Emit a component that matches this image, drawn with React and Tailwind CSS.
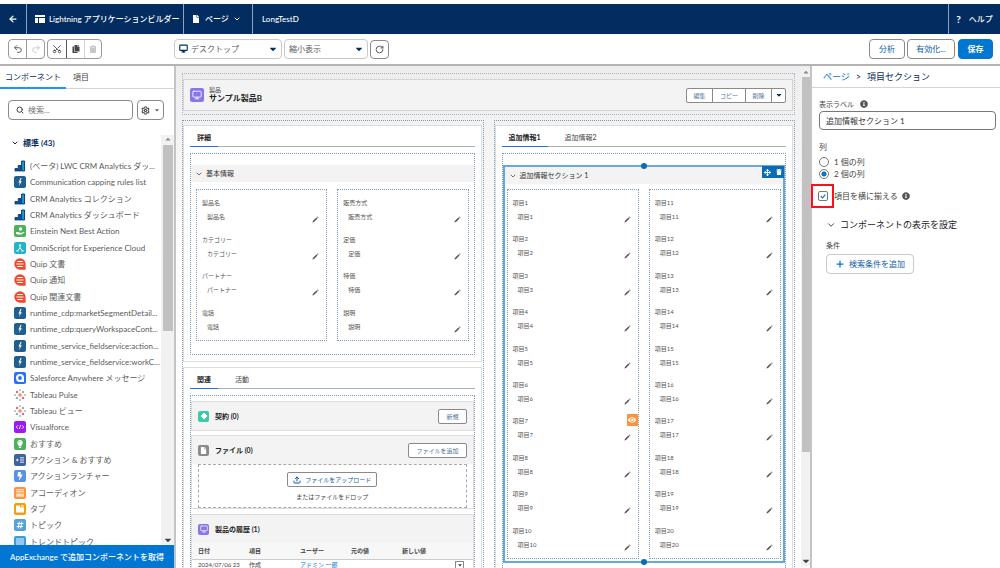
import { ArrowLeft, ChevronDown, Monitor, Plus, Redo2, RotateCw, Scissors, Search, Settings, Undo2, Upload } from 'lucide-react';
import { FaArrowsAlt, FaBolt, FaCaretDown, FaCaretUp, FaClipboard, FaCopy, FaEye, FaFile, FaHashtag, FaInfoCircle, FaLightbulb, FaTrash } from 'react-icons/fa';

// kind picks the icon drawn in front of the label
const STANDARD_COMPONENTS = [
  { label: '(ベータ) LWC CRM Analytics ダッ...', kind: 'analytics' },
  { label: 'Communication capping rules list', kind: 'lightning' },
  { label: 'CRM Analytics コレクション', kind: 'analytics' },
  { label: 'CRM Analytics ダッシュボード', kind: 'analytics' },
  { label: 'Einstein Next Best Action', kind: 'einstein' },
  { label: 'OmniScript for Experience Cloud', kind: 'omni' },
  { label: 'Quip 文書', kind: 'quip' },
  { label: 'Quip 通知', kind: 'quip' },
  { label: 'Quip 関連文書', kind: 'quip' },
  { label: 'runtime_cdp:marketSegmentDetail...', kind: 'lightning' },
  { label: 'runtime_cdp:queryWorkspaceCont...', kind: 'lightning' },
  { label: 'runtime_service_fieldservice:action...', kind: 'lightning' },
  { label: 'runtime_service_fieldservice:workC...', kind: 'lightning' },
  { label: 'Salesforce Anywhere メッセージ', kind: 'anywhere' },
  { label: 'Tableau Pulse', kind: 'tableau' },
  { label: 'Tableau ビュー', kind: 'tableau' },
  { label: 'Visualforce', kind: 'visualforce' },
  { label: 'おすすめ', kind: 'suggest' },
  { label: 'アクション & おすすめ', kind: 'actions' },
  { label: 'アクションランチャー', kind: 'launcher' },
  { label: 'アコーディオン', kind: 'accordion' },
  { label: 'タブ', kind: 'tabs' },
  { label: 'トピック', kind: 'topic' },
  { label: 'トレンドトピック', kind: 'trend' },
];

const BASIC_LEFT = ['製品名', 'カテゴリー', 'パートナー', '電話'];
const BASIC_RIGHT = ['販売方式', '定価', '特価', '説明'];
const EXTRA_LEFT = Array.from({ length: 10 }, (_, i) => `項目${i + 1}`);
const EXTRA_RIGHT = Array.from({ length: 10 }, (_, i) => `項目${i + 11}`);

function Tile({ className, children }) {
  return (
    <span className={`flex shrink-0 items-center justify-center rounded-xs text-white ${className}`}>
      {children}
    </span>
  );
}

function ComponentIcon({ kind }) {
  switch (kind) {
    case 'analytics':
      return (
        <svg viewBox="0 0 12 12" className="size-3 shrink-0">
          <path d="M1 8.5h2.6V11H1zM4.2 5.5h2.8V11H4.2z" fill="#0b5cab" stroke="#032d60" strokeWidth=".8" />
          <path d="M7.6 1h3v10h-3z" fill="#0d9dda" stroke="#032d60" strokeWidth=".9" />
        </svg>
      );
    case 'lightning':
      return (
        <Tile className="size-3 bg-[#215f8e]">
          <svg viewBox="0 0 12 12" className="size-3"><path d="M6.6 2 4.4 6.6h1.4L5 10l2.8-4.8H6.3L7.6 2z" fill="currentColor" /></svg>
        </Tile>
      );
    case 'einstein':
      return (
        <Tile className="size-3 bg-[#4bb15a]">
          <svg viewBox="0 0 12 12" className="size-3" fill="currentColor">
            <circle cx="6.5" cy="4" r="1.7" /><path d="M2 7h2l2 .7h2l2-.9.4.8L7.4 9.6H4L2 9z" />
          </svg>
        </Tile>
      );
    case 'omni':
      return (
        <Tile className="size-3 bg-[#1fb6c9]">
          <svg viewBox="0 0 12 12" className="size-3" fill="none" stroke="currentColor">
            <path d="M6 4v2M3.5 8.5 6 6l2.5 2.5" />
            <path d="M5 2.5h2V4H5zM2.5 8h2v1.5h-2zM7.5 8h2v1.5h-2z" fill="currentColor" stroke="none" />
          </svg>
        </Tile>
      );
    case 'quip':
      return (
        <svg viewBox="0 0 12 12" className="size-3 shrink-0">
          <path d="M6 .3a5.7 5.7 0 1 0 0 11.4h5.6V6A5.7 5.7 0 0 0 6 .3z" fill="#f0492e" />
          <path d="M3.2 3.5h5.6M2.4 6h7.2M3.2 8.5h5.6" stroke="#fff" />
        </svg>
      );
    case 'anywhere':
      return (
        <Tile className="size-3 bg-[#2a73f0]">
          <svg viewBox="0 0 12 12" className="size-3">
            <path d="M6 2a4 4 0 1 0 0 8h4V6a4 4 0 0 0-4-4z" fill="#fff" /><circle cx="6" cy="6" r="1.9" fill="#2a73f0" />
          </svg>
        </Tile>
      );
    case 'tableau':
      return (
        <svg viewBox="0 0 12 12" className="size-3 shrink-0" fill="none">
          <path d="M6 4v4M4 6h4" stroke="#e8762d" strokeWidth="1" />
          <path d="M3 1.8v2.4M1.8 3h2.4M9 7.8v2.4M7.8 9h2.4" stroke="#c72037" strokeWidth=".8" />
          <path d="M9 1.8v2.4M7.8 3h2.4M3 7.8v2.4M1.8 9h2.4" stroke="#5b879b" strokeWidth=".8" />
          <path d="M6 0v2M5 1h2M6 10v2M5 11h2M1 5v2M0 6h2M11 5v2M10 6h2" stroke="#8a8fb5" strokeWidth=".6" />
        </svg>
      );
    case 'visualforce':
      return (
        <Tile className="size-3 bg-[#9a1af0]">
          <svg viewBox="0 0 12 12" className="size-3" fill="none" stroke="currentColor" strokeWidth=".8">
            <path d="M4 4.2 2.2 6 4 7.8M8 4.2 9.8 6 8 7.8M6.6 4 5.4 8" />
          </svg>
        </Tile>
      );
    case 'suggest':
      return <Tile className="size-3 bg-[#4bb15a]"><FaLightbulb className="size-2" /></Tile>;
    case 'actions':
      return (
        <Tile className="size-3 bg-[#3f63a0]">
          <svg viewBox="0 0 12 12" className="size-3" stroke="currentColor" strokeWidth=".9">
            <path d="M2 6h2.6M3.3 4.7v2.6M6 3.8h4M6 6h4M6 8.2h4" />
          </svg>
        </Tile>
      );
    case 'launcher':
      return <Tile className="size-3 bg-[#5a92e6]"><FaBolt className="size-2" /></Tile>;
    case 'accordion':
      return (
        <Tile className="size-3 bg-[#fe9339]">
          <svg viewBox="0 0 12 12" className="size-3">
            <path d="M2 2.8h8M2 4.8h8" stroke="#fff" strokeWidth=".9" /><path d="M2 6.4h8v3.4H2z" fill="#ffdcbb" />
          </svg>
        </Tile>
      );
    case 'tabs':
      return (
        <Tile className="size-3 bg-[#f39e0b]">
          <svg viewBox="0 0 12 12" className="size-3"><path d="M2 2.4h4v1.8h4v5.4H2z" fill="#fff" /><path d="M7 2.4h3v1H7z" fill="#fff" /></svg>
        </Tile>
      );
    case 'topic':
      return <Tile className="size-3 bg-[#56a0dc]"><FaHashtag className="size-2" /></Tile>;
    default:
      return (
        <Tile className="size-3 bg-[#3d9bdc]">
          <svg viewBox="0 0 12 12" className="size-3" stroke="#fff" strokeWidth=".9"><path d="M2 3h8M2 5h8M2 7h8M2 9h8" /></svg>
        </Tile>
      );
  }
}

function NavBar() {
  return (
    <header className="mt-1 flex h-[30px] shrink-0 items-stretch bg-[#032d60] text-[8px] font-medium text-white">
      <button aria-label="戻る" className="flex w-[27px] items-center justify-center border-r border-[#8fa3bd]">
        <ArrowLeft className="size-[10px]" strokeWidth={3} />
      </button>
      <div className="flex w-[157px] items-center gap-1 border-r border-[#8fa3bd] pl-2 whitespace-nowrap">
        <svg viewBox="0 0 10 10" className="size-[10px] shrink-0" fill="currentColor">
          <path d="M0 1h10v2H0zM0 4h3v5H0zM4 4h6v5H4z" />
        </svg>
        Lightning アプリケーションビルダー
      </div>
      <button className="flex w-[69px] items-center gap-1 border-r border-[#8fa3bd] pl-2 text-[8px] whitespace-nowrap">
        <FaFile className="mr-px size-2" />
        ページ
        <ChevronDown className="size-2" strokeWidth={3} />
      </button>
      <div className="flex flex-1 items-center pl-[9px]">LongTestD</div>
      <button className="flex w-[52px] items-center justify-center gap-2 border-l border-[#8fa3bd]">
        <span className="text-[10px] font-bold">?</span>ヘルプ
      </button>
    </header>
  );
}

function Picker({ label, options, className, padding, icon }) {
  return (
    <div className={`relative h-5 ${className}`}>
      <select aria-label={label} className={`block size-full appearance-none rounded-sm border border-[#c9c9c9] bg-white text-[8px] text-[#5c5c5c] ${padding}`}>
        {options.map((o) => <option key={o}>{o}</option>)}
      </select>
      {icon}
      <FaCaretDown className="pointer-events-none absolute top-[5px] right-1 size-[10px] text-[#032d60]" />
    </div>
  );
}

function Toolbar() {
  const tool = 'flex h-[18px] items-center justify-center text-[#444]';
  const action = 'flex h-5 items-center justify-center rounded-sm border text-[8px] whitespace-nowrap';
  return (
    <div className="flex h-8 shrink-0 items-center border-b-2 border-[#b3b3b3] bg-white">
      <div className="flex w-[174px] gap-[2px] pl-2">
        <div className="flex rounded-sm border border-[#9a9a9a]">
          <button aria-label="元に戻す" className={`${tool} w-[18px] border-r border-[#9a9a9a]`}><Undo2 className="size-[10px]" /></button>
          <button aria-label="やり直し" disabled className={`${tool} w-[17px] opacity-30`}><Redo2 className="size-[10px]" /></button>
        </div>
        <div className="flex rounded-sm border border-[#9a9a9a]">
          <button aria-label="切り取り" className={`${tool} w-[18px]`}><Scissors className="size-[10px] -rotate-90" /></button>
          <button aria-label="コピー" className={`${tool} w-[18px] border-l border-[#555]`}><FaCopy className="size-2" /></button>
          <button aria-label="貼り付け" disabled className={`${tool} w-[17px] border-l border-[#777] opacity-30`}><FaClipboard className="size-2" /></button>
        </div>
      </div>
      <Picker
        label="デバイス"
        options={['デスクトップ', '電話']}
        className="w-[108px]"
        padding="pl-4"
        icon={<Monitor className="pointer-events-none absolute top-[5px] left-[5px] size-[9px] text-[#032d60]" strokeWidth={3} />}
      />
      <Picker label="表示倍率" options={['縮小表示', '100%']} className="ml-[2px] w-[84px]" padding="pl-1" />
      <button aria-label="更新" className="ml-[2px] flex size-[19px] items-center justify-center rounded-sm border border-[#8a8a8a] text-[#555]">
        <RotateCw className="size-[9px]" strokeWidth={2.5} />
      </button>
      <div className="ml-auto flex gap-[2px] pr-[7px]">
        <button className={`${action} w-9 border-[#8a8a8a] text-[#0b5cab]`}>分析</button>
        <button className={`${action} w-12 border-[#8a8a8a] text-[#0b5cab]`}>有効化...</button>
        <button className={`${action} ml-px w-[35px] border-[#0176d3] bg-[#0176d3] font-bold text-white`}>保存</button>
      </div>
    </div>
  );
}

function ScrollTrack({ className, thumb }) {
  return (
    <div aria-hidden="true" className={`flex flex-col items-center bg-[#f1f1f1] ${className}`}>
      <FaCaretUp className="size-2 shrink-0 text-[#888]" />
      <div className={`shrink-0 bg-[#c1c1c1] ${thumb}`} />
      <FaCaretDown className="mt-auto size-[10px] shrink-0 text-[#444]" />
    </div>
  );
}

function ComponentPanel() {
  return (
    <aside className="flex w-[176px] shrink-0 flex-col border-r-2 border-[#c4c4c4] bg-white">
      <div role="tablist" className="flex h-[23px] shrink-0 border-b border-[#d4d4d4] text-[8px]">
        <button role="tab" aria-selected="true" className="-mb-px w-[66px] border-b-2 border-[#1b96ff] text-[#032d60]">コンポーネント</button>
        <button role="tab" aria-selected="false" className="w-[30px] text-[#444]">項目</button>
      </div>
      <div className="mt-[11px] flex shrink-0 gap-1 pl-2">
        <label className="flex h-5 w-[125px] items-center gap-1 rounded-sm border border-[#8a8a8a] px-[7px]">
          <Search className="size-2 shrink-0 text-[#444]" strokeWidth={3} />
          <input aria-label="コンポーネントを検索" placeholder="検索..." className="w-full text-[8px] outline-none placeholder:text-[#777]" />
        </label>
        <button aria-label="設定" className="flex h-5 w-[27px] items-center justify-center gap-1 rounded-sm border border-[#8a8a8a] text-[#555]">
          <Settings className="size-[9px]" strokeWidth={3} />
          <FaCaretDown className="size-[6px]" />
        </button>
      </div>
      <div className="mt-3 flex min-h-0 flex-1">
        <div className="min-w-0 flex-1 overflow-hidden">
          <button className="flex h-[22px] items-center gap-1 pl-[11px] text-[8px] font-bold text-[#032d60]">
            <ChevronDown className="size-2" strokeWidth={3} />
            標準 (43)
          </button>
          <ul className="mt-1 flex h-[392px] flex-col text-[8px] text-[#5c5c5c]">
            {STANDARD_COMPONENTS.map(({ label, kind }) => (
              <li key={label} className="flex flex-1 items-center">
                <button className="flex h-4 items-center gap-1 pl-[14px] text-left whitespace-nowrap">
                  <ComponentIcon kind={kind} />
                  {label}
                </button>
              </li>
            ))}
          </ul>
        </div>
        <ScrollTrack className="mt-[3px] w-[13px]" thumb="w-[10px] mt-[2px] h-[186px]" />
      </div>
      <a href="#appexchange" className="flex h-[23px] shrink-0 items-center justify-center bg-[#0176d3] text-[8px] font-medium whitespace-nowrap text-white">
        AppExchange で追加コンポーネントを取得
      </a>
    </aside>
  );
}

function FieldColumn({ fields, readOnly = [], hidden = [] }) {
  return (
    <div className="flex flex-1 flex-col border border-dotted border-[#7f97b8] pt-1">
      {fields.map((name) => (
        <div key={name} className="relative flex flex-1 justify-between pr-[7px] pl-[5px] text-[6px] text-[#555]">
          <div>
            <div className="h-4 leading-[18px]">{name}</div>
            <div className="h-3 pl-[5px] leading-[14px]">{name}</div>
          </div>
          {!readOnly.includes(name) && (
            <button aria-label={`${name}を編集`} className="mt-[22px] size-[7px] text-[#555]">
              <svg viewBox="0 0 7 7" className="size-[7px]" fill="currentColor">
                <path d="M.4 6.6.9 5 4.4 1.5l1.1 1.1L2 6.1zM4.9 1l.6-.6 1.1 1.1-.6.6z" />
              </svg>
            </button>
          )}
          {hidden.includes(name) && (
            <span className="absolute top-[2px] right-0 flex h-3 w-[11px] items-center justify-center bg-[#fe9339] text-white">
              <FaEye className="size-2" />
            </span>
          )}
        </div>
      ))}
    </div>
  );
}

function SectionHeader({ children }) {
  return (
    <button className="flex h-[17px] w-full shrink-0 items-center gap-[3px] bg-[#f3f3f3] pl-1 text-[7px] text-[#333]">
      <ChevronDown className="size-2" />
      {children}
    </button>
  );
}

function CardTabs({ tabs, activeWidth }) {
  return (
    <div role="tablist" className="flex h-[21px] gap-4 border-b border-[#aeb0b3] pt-[2px] text-[7px] text-[#444]">
      {tabs.map((t, i) => (
        <button
          key={t}
          role="tab"
          aria-selected={i === 0}
          className={i === 0 ? `-mb-px border-b border-[#1b78d8] font-bold text-[#222] ${activeWidth}` : 'pl-px'}
        >
          {t}
        </button>
      ))}
    </div>
  );
}

function RelatedHeader({ icon, title, action }) {
  return (
    <div className="flex h-7 items-center gap-[6px] bg-[#f3f3f3] px-[6px]">
      {icon}
      <h3 className="flex-1 text-[7px] font-bold text-[#222]">{title}</h3>
      {action && (
        <button className="h-[15px] rounded-xs border border-[#8a8a8a] bg-white px-[7px] text-[6px] text-[#4f7398]">{action}</button>
      )}
    </div>
  );
}

function RecordHeader() {
  return (
    <div className="border border-dotted border-[#9fb3cf] pt-[5px] pr-px pb-[3px]">
      <div className="flex h-8 items-center border border-[#d4d4d4] bg-[#f3f3f3] px-[6px]">
        <Tile className="size-[14px] bg-[#8a76e8]"><Monitor className="size-[10px]" /></Tile>
        <div className="flex-1 pl-[5px]">
          <div className="text-[6px] leading-[6px] text-[#444]">製品</div>
          <h1 className="text-[8px] leading-[10px] font-bold text-[#222]">サンプル製品B</h1>
        </div>
        <div className="flex h-[15px] divide-x divide-[#8a8a8a] rounded-xs border border-[#8a8a8a] bg-white text-[6px] text-[#4f7398]">
          <button className="w-[26px]">編集</button>
          <button className="w-[33px]">コピー</button>
          <button className="w-[26px]">削除</button>
          <button aria-label="その他のアクション" className="flex w-[13px] items-center justify-center text-[#032d60]"><FaCaretDown className="size-2" /></button>
        </div>
      </div>
    </div>
  );
}

function RelatedLists() {
  return (
    <div className="mt-[6px] flex flex-col border border-dotted border-[#7f97b8] pt-[5px] pb-6">
      <div className="border border-[#ddd]">
        <RelatedHeader
          icon={(
            <Tile className="size-[11px] bg-[#3bcaaa]">
              <svg viewBox="0 0 10 10" className="size-[10px]"><path d="M5 2 8 5 5 8 2 5z" fill="#fff" stroke="#fff" strokeLinejoin="round" /></svg>
            </Tile>
          )}
          title="契約 (0)"
          action="新規"
        />
      </div>
      <div className="mt-1 border border-[#ddd]">
        <RelatedHeader
          icon={<Tile className="size-[11px] bg-[#8b8b8b]"><FaFile className="size-[7px]" /></Tile>}
          title="ファイル (0)"
          action="ファイルを追加"
        />
        <div className="mx-[6px] flex h-11 flex-col items-center border border-dashed border-[#aaa] pt-[7px]">
          <button className="flex h-[15px] items-center gap-1 rounded-xs border border-[#8a8a8a] px-[5px] text-[6px] text-[#0b5cab]">
            <Upload className="size-2" strokeWidth={3} />
            ファイルをアップロード
          </button>
          <span className="mt-1 text-[6px] leading-[12px] text-[#444]">またはファイルをドロップ</span>
        </div>
      </div>
      <div className="mt-[5px] border border-[#ddd]">
        <RelatedHeader
          icon={<Tile className="size-[11px] bg-[#8a76e8]"><Monitor className="size-2" /></Tile>}
          title="製品の履歴 (1)"
        />
        <table className="w-full table-fixed text-left text-[6px] text-[#444]">
          <thead className="bg-[#f7f7f7]">
            <tr className="h-4 border-b border-[#ccc]">
              {['日付', '項目', 'ユーザー', '元の値', '新しい値'].map((h) => (
                <th key={h} className="w-[51px] pl-[6px] font-bold">{h}</th>
              ))}
              <th aria-label="操作" />
            </tr>
          </thead>
          <tbody>
            <tr className="h-3">
              <td className="pl-[6px] leading-[6px] whitespace-nowrap">2024/07/06 23</td>
              <td className="pl-[6px] leading-[6px]">作成</td>
              <td className="pl-[6px] leading-[6px] whitespace-nowrap"><a href="#user" className="text-[#0176d3]">アドミン 一郎</a></td>
              <td />
              <td />
              <td>
                <button aria-label="行のアクション" className="ml-2 flex size-[9px] items-center justify-center border border-[#8a8a8a]"><FaCaretDown className="size-[6px]" /></button>
              </td>
            </tr>
          </tbody>
        </table>
      </div>
    </div>
  );
}

function SelectedSection() {
  return (
    <div className="relative mt-[11px] border-2 border-[#64aadd]">
      <SectionHeader>追加情報セクション 1</SectionHeader>
      <div className="flex h-[377px] gap-[10px] px-[2px] pt-[5px] pb-[2px]">
        <FieldColumn fields={EXTRA_LEFT} hidden={['項目7']} />
        <FieldColumn fields={EXTRA_RIGHT} />
      </div>
      <span className="absolute -top-1 left-1/2 size-[6px] -translate-x-1/2 rounded-full bg-[#0b6cb5]" />
      <span className="absolute -bottom-1 left-1/2 size-[6px] -translate-x-1/2 rounded-full bg-[#0b6cb5]" />
      <div className="absolute -top-px -right-px flex h-3 w-[22px] items-center justify-around bg-[#0b6cb5] text-white">
        <button aria-label="移動"><FaArrowsAlt className="size-[7px]" /></button>
        <button aria-label="削除"><FaTrash className="size-[6px]" /></button>
      </div>
    </div>
  );
}

function Canvas() {
  const column = 'min-w-0 flex-1 border border-dotted border-[#7f97b8] pt-1 pr-px';
  const card = 'border border-[#ddd] bg-white px-[6px] pb-[6px]';
  return (
    <main className="flex min-w-0 flex-1 bg-linear-to-b from-[#ededed] to-white to-40%">
      <div className="min-w-0 flex-1 overflow-hidden px-[6px] pt-[7px]">
        <RecordHeader />
        <div className="mt-[5px] flex items-stretch gap-[10px]">
          <div className={column}>
            <section className={card}>
              <CardTabs tabs={['詳細']} activeWidth="w-[28px]" />
              <div className="mt-[6px] border border-dotted border-[#7f97b8] pt-[11px] pb-[13px]">
                <SectionHeader>基本情報</SectionHeader>
                <div className="mt-[7px] flex h-[152px] gap-[10px] px-[5px]">
                  <FieldColumn fields={BASIC_LEFT} readOnly={['電話']} />
                  <FieldColumn fields={BASIC_RIGHT} />
                </div>
              </div>
            </section>
            <section className={`${card} mt-[5px]`}>
              <CardTabs tabs={['関連', '活動']} activeWidth="w-[28px]" />
              <RelatedLists />
            </section>
          </div>
          <div className={column}>
            <section className={`${card} h-full`}>
              <CardTabs tabs={['追加情報1', '追加情報2']} activeWidth="w-[46px]" />
              <div className="mt-[6px] border border-dotted border-[#7f97b8] pb-4">
                <SelectedSection />
              </div>
            </section>
          </div>
        </div>
      </div>
      <ScrollTrack className="my-[2px] w-[9px]" thumb="w-2 mt-px h-[375px]" />
    </main>
  );
}

function PropertyPanel() {
  return (
    <aside className="w-[190px] shrink-0 border-l-2 border-[#c4c4c4] bg-white text-[8px] text-[#444]">
      <nav className="flex h-[22px] items-center gap-[6px] border-b border-[#d4d4d4] pl-[11px] text-[9px] text-[#032d60]">
        <a href="#page" className="text-[#0176d3]">ページ</a>
        <span>&gt;</span>
        <span>項目セクション</span>
      </nav>
      <div className="pr-1 pl-[7px]">
        <div className="mt-[10px] flex h-3 items-center gap-[6px]">
          <label htmlFor="section-label" className="text-[7px]">表示ラベル</label>
          <FaInfoCircle className="size-2 text-[#555]" />
        </div>
        <input id="section-label" defaultValue="追加情報セクション 1" className="mt-px block h-[19px] w-full rounded-sm border border-[#777] px-[6px] text-[8px] text-[#333]" />
        <fieldset className="mt-[11px]">
          <legend className="leading-3">列</legend>
          <label className="mt-[2px] flex h-[13px] items-center gap-[5px]">
            <input type="radio" name="columns" className="size-[10px] appearance-none rounded-full border border-[#777] bg-white" />
            1 個の列
          </label>
          <label className="flex h-3 items-center gap-[5px]">
            <input type="radio" name="columns" defaultChecked className="size-[10px] appearance-none rounded-full border border-[#777] bg-white bg-radial from-[#0176d3] from-40% to-white to-50%" />
            2 個の列
          </label>
        </fieldset>
        <div className="mt-1 -ml-2 flex h-6 items-center">
          <label className="flex h-6 items-center">
            <span className="flex h-6 w-[23px] items-center justify-center border-2 border-[#f5141c]">
              <span className="relative size-[10px]">
                <input type="checkbox" defaultChecked className="block size-[10px] appearance-none rounded-xs border border-[#777] bg-white" />
                <svg viewBox="0 0 10 10" className="pointer-events-none absolute inset-0" fill="none" stroke="#0176d3" strokeWidth="1.2"><path d="M2.8 5.2 4.4 6.8 7.4 3.6" /></svg>
              </span>
            </span>
            項目を横に揃える
          </label>
          <FaInfoCircle className="ml-1 size-2 text-[#555]" />
        </div>
        <button className="mt-[9px] flex h-4 items-center gap-1 pl-[7px] text-[9px] text-[#222]">
          <ChevronDown className="size-[10px]" />
          コンポーネントの表示を設定
        </button>
        <div className="pl-[7px]">
          <div className="mt-[6px] text-[7px] leading-3">条件</div>
          <button className="mt-[3px] flex h-5 w-[88px] items-center justify-center gap-1 rounded-sm border border-[#c9c9c9] text-[#0b5cab]">
            <Plus className="size-[10px] text-[#0176d3]" strokeWidth={3} />
            検索条件を追加
          </button>
        </div>
      </div>
    </aside>
  );
}

export default function App() {
  return (
    <div className="flex h-screen flex-col overflow-hidden bg-white font-['Lato','Noto_Sans_CJK_JP',sans-serif]">
      <NavBar />
      <Toolbar />
      <div className="flex min-h-0 flex-1">
        <ComponentPanel />
        <Canvas />
        <PropertyPanel />
      </div>
    </div>
  );
}
